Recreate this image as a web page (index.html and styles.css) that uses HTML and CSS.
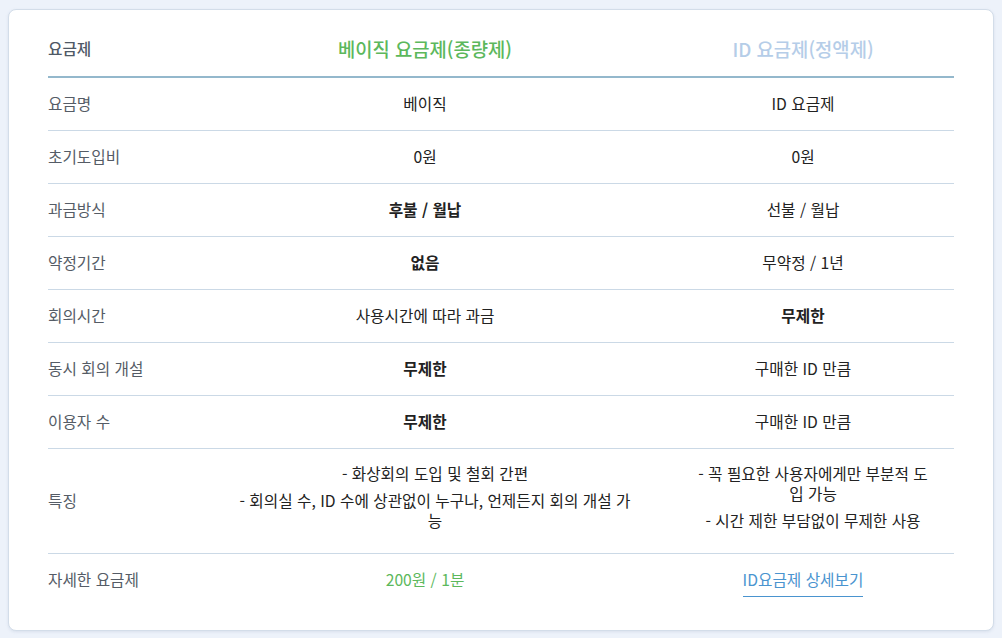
FILE: index.html
```html
<!DOCTYPE html>
<html lang="ko">
<head>
<meta charset="utf-8">
<link rel="stylesheet" href="styles.css">
</head>
<body>
<div class="card">
  <table class="plans">
    <colgroup>
      <col class="c-label"><col class="c-basic"><col class="c-id">
    </colgroup>
    <thead>
      <tr>
        <th class="label">요금제</th>
        <th class="basic-title">베이직 요금제(종량제)</th>
        <th class="id-title">ID 요금제(정액제)</th>
      </tr>
    </thead>
    <tbody>
      <tr><td class="label">요금명</td><td>베이직</td><td>ID 요금제</td></tr>
      <tr><td class="label">초기도입비</td><td>0원</td><td>0원</td></tr>
      <tr><td class="label">과금방식</td><td class="strong">후불 / 월납</td><td>선불 / 월납</td></tr>
      <tr><td class="label">약정기간</td><td class="strong">없음</td><td>무약정 / 1년</td></tr>
      <tr><td class="label">회의시간</td><td>사용시간에 따라 과금</td><td class="strong">무제한</td></tr>
      <tr><td class="label">동시 회의 개설</td><td class="strong">무제한</td><td>구매한 ID 만큼</td></tr>
      <tr><td class="label">이용자 수</td><td class="strong">무제한</td><td>구매한 ID 만큼</td></tr>
      <tr class="features">
        <td class="label">특징</td>
        <td><ul class="feat"><li>- 화상회의 도입 및 철회 간편</li><li>- 회의실 수, ID 수에 상관없이 누구나, 언제든지 회의 개설 가능</li></ul></td>
        <td><ul class="feat"><li>- 꼭 필요한 사용자에게만 부분적 도입 가능</li><li>- 시간 제한 부담없이 무제한 사용</li></ul></td>
      </tr>
      <tr class="last">
        <td class="label">자세한 요금제</td>
        <td class="price">200원 / 1분</td>
        <td><a class="more" href="#">ID요금제 상세보기</a></td>
      </tr>
    </tbody>
  </table>
</div>
</body>
</html>
```
FILE: styles.css
```css
html, body {
  margin: 0;
  padding: 0;
  background: #edf2fa;
}
body {
  padding: 9px 8px 8px 8px;
  font-family: "Noto Sans CJK KR", "Noto Sans", sans-serif;
  font-size: 15.7px;
  color: #222;
}
.card {
  background: #fff;
  border: 1px solid #d3dde9;
  border-radius: 8px;
  box-shadow: 0 1px 3px rgba(120, 145, 180, 0.18);
  padding: 20px 39px 24px 39px;
}
.plans {
  width: 100%;
  border-collapse: collapse;
  table-layout: fixed;
}
.c-label { width: 150px; }
.c-basic { width: 454px; }
.c-id { width: 302px; }
th, td {
  text-align: center;
  vertical-align: middle;
  line-height: 20px;
  padding: 16px 0;
  border-bottom: 1px solid #cbd9e6;
  font-weight: 400;
  word-break: break-all;
}
thead th {
  padding: 8px 0 16px;
  border-bottom: 2px solid #94b8cc;
  font-size: 18.8px;
  font-weight: 500;
  line-height: 22px;
}
thead th.label {
  font-size: 15.7px;
  font-weight: 500;
  color: #4f5966;
}
.label {
  text-align: left;
  color: #555c66;
}
.basic-title { color: #5cb85c; }
.id-title { color: #b5cde8; }
.strong { font-weight: 700; color: #222; }
.features td { padding: 15px 0; }
.feat {
  list-style: none;
  margin: 0;
  padding: 0 20px 0 40px;
}
.feat li { margin: 0 0 7px; line-height: 20px; }
.last td { border-bottom: none; padding: 16px 0; }
.price { color: #5cb85c; }
.more {
  color: #4a94cf;
  text-decoration: none;
  border-bottom: 1px solid #4a94cf;
  padding-bottom: 5px;
}
```
